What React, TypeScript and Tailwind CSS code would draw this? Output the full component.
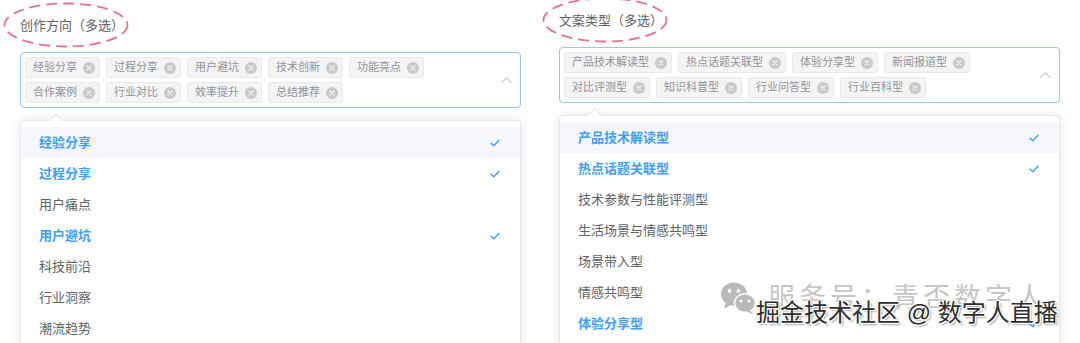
import React from "react";

type Option = { label: string; selected?: boolean; hover?: boolean };

const leftTags = ["经验分享", "过程分享", "用户避坑", "技术创新", "功能亮点", "合作案例", "行业对比", "效率提升", "总结推荐"];
const leftOptions: Option[] = [
  { label: "经验分享", selected: true, hover: true },
  { label: "过程分享", selected: true },
  { label: "用户痛点" },
  { label: "用户避坑", selected: true },
  { label: "科技前沿" },
  { label: "行业洞察" },
  { label: "潮流趋势" },
  { label: "技术创新", selected: true },
];

const rightTags = ["产品技术解读型", "热点话题关联型", "体验分享型", "新闻报道型", "对比评测型", "知识科普型", "行业问答型", "行业百科型"];
const rightOptions: Option[] = [
  { label: "产品技术解读型", selected: true, hover: true },
  { label: "热点话题关联型", selected: true },
  { label: "技术参数与性能评测型" },
  { label: "生活场景与情感共鸣型" },
  { label: "场景带入型" },
  { label: "情感共鸣型" },
  { label: "体验分享型", selected: true },
  { label: "新闻报道型", selected: true },
];

const Tag: React.FC<{ text: string }> = ({ text }) => (
  <span className="flex h-[21px] items-center rounded-[3px] border border-[#e9e9eb] bg-[#f4f4f5] pl-[7px] pr-[4px] text-[11px] leading-none text-[#909399]">
    {text}
    <span className="ml-[6px] flex size-[12px] items-center justify-center rounded-full bg-[#c8c9cc]">
      <svg width="6" height="6" viewBox="0 0 6 6" fill="none">
        <path d="M1 1L5 5M5 1L1 5" stroke="#f4f4f5" strokeWidth="1.1" strokeLinecap="round" />
      </svg>
    </span>
  </span>
);

const Check = () => (
  <svg width="10" height="8" viewBox="0 0 10 8" fill="none">
    <path d="M1 4.2L3.8 6.8L9 1.2" stroke="#409eff" strokeWidth="1.4" strokeLinecap="round" strokeLinejoin="round" />
  </svg>
);

const Column: React.FC<{ label: string; tags: string[]; options: Option[]; top: string }> = ({ label, tags, options, top }) => (
  <div className={`w-[539px] pl-[20px] ${top}`}>
    {/* label with the dashed ring */}
    <div className="relative w-fit text-[13px] leading-[18px] text-[#606266]">
      {label}
      <svg className="absolute left-[-17px] top-[-15px] h-[46px] w-[126px] overflow-visible" viewBox="0 0 126 46" fill="none">
        <ellipse cx="63" cy="23" rx="61.5" ry="21.5" stroke="#e6728a" strokeWidth="1.8" strokeDasharray="11 6" />
      </svg>
    </div>

    {/* select box */}
    <div className="mt-[17px] flex w-[501px] items-center rounded-[4px] border border-[#94c6f7] p-[4px]">
      <div className="flex flex-1 flex-wrap gap-x-[6px] gap-y-[4px]">
        {tags.map((t) => (
          <Tag key={t} text={t} />
        ))}
      </div>
      <div className="flex w-[20px] justify-center">
        <svg width="11" height="6" viewBox="0 0 11 6" fill="none">
          <path d="M0.8 5.4L5.5 0.8L10.2 5.4" stroke="#c0c4cc" strokeWidth="1.1" strokeLinecap="round" strokeLinejoin="round" />
        </svg>
      </div>
    </div>

    {/* dropdown */}
    <div className="relative mt-[12px] w-[501px] rounded-[4px] border border-[#e4e7ed] bg-white py-[6px] shadow-[0_0_12px_rgba(0,0,0,0.1)]">
      <div className="absolute left-[30px] top-[-6px] size-[10px] rotate-45 border-l border-t border-[#e4e7ed] bg-white" />
      {options.map((o) => (
        <div
          key={o.label}
          className={`flex h-[31px] items-center justify-between pl-[18px] pr-[20px] text-[13px] ${
            o.hover ? "bg-[#f5f7fa]" : "bg-white"
          } ${o.selected ? "font-bold text-[#409eff]" : "text-[#606266]"}`}
        >
          <span>{o.label}</span>
          {o.selected && <Check />}
        </div>
      ))}
    </div>
  </div>
);

export default function App() {
  return (
    <div className="relative h-[343px] w-[1080px] overflow-hidden bg-white [font-family:'Liberation_Sans','Noto_Sans_CJK_SC',sans-serif]">
      <div className="flex">
        <Column label="创作方向（多选）" tags={leftTags} options={leftOptions} top="pt-[17px]" />
        <Column label="文案类型（多选）" tags={rightTags} options={rightOptions} top="pt-[12px]" />
      </div>

      {/* watermark */}
      <div className="absolute left-[720px] top-[281px] flex items-center gap-[12px]">
        <svg width="36" height="34" viewBox="0 0 36 34">
          <ellipse cx="14" cy="13" rx="13" ry="11.5" fill="#b9b9b9" />
          <path d="M6 21L4 27.5L12 23.5Z" fill="#b9b9b9" />
          <circle cx="9.5" cy="10" r="1.9" fill="#fff" />
          <circle cx="18.5" cy="10" r="1.9" fill="#fff" />
          <ellipse cx="25" cy="22" rx="10.5" ry="9.2" fill="#b9b9b9" stroke="#fff" strokeWidth="1.5" />
          <path d="M30 29L33 33.5L27 30.5Z" fill="#b9b9b9" />
          <circle cx="21" cy="20" r="1.5" fill="#fff" />
          <circle cx="29" cy="20" r="1.5" fill="#fff" />
        </svg>
        <span className="text-[27px] leading-none tracking-[4px] text-[#c6c6c6]">服务号：青否数字人</span>
      </div>
      <div className="absolute left-[756px] top-[301px] text-[24px] leading-none text-[#2e2e2e] [text-shadow:1px_1px_0_#fff,-1px_-1px_0_#fff,1px_-1px_0_#fff,-1px_1px_0_#fff,2px_2px_2px_#9a9a9a]">
        掘金技术社区 @ 数字人直播
      </div>
    </div>
  );
}
